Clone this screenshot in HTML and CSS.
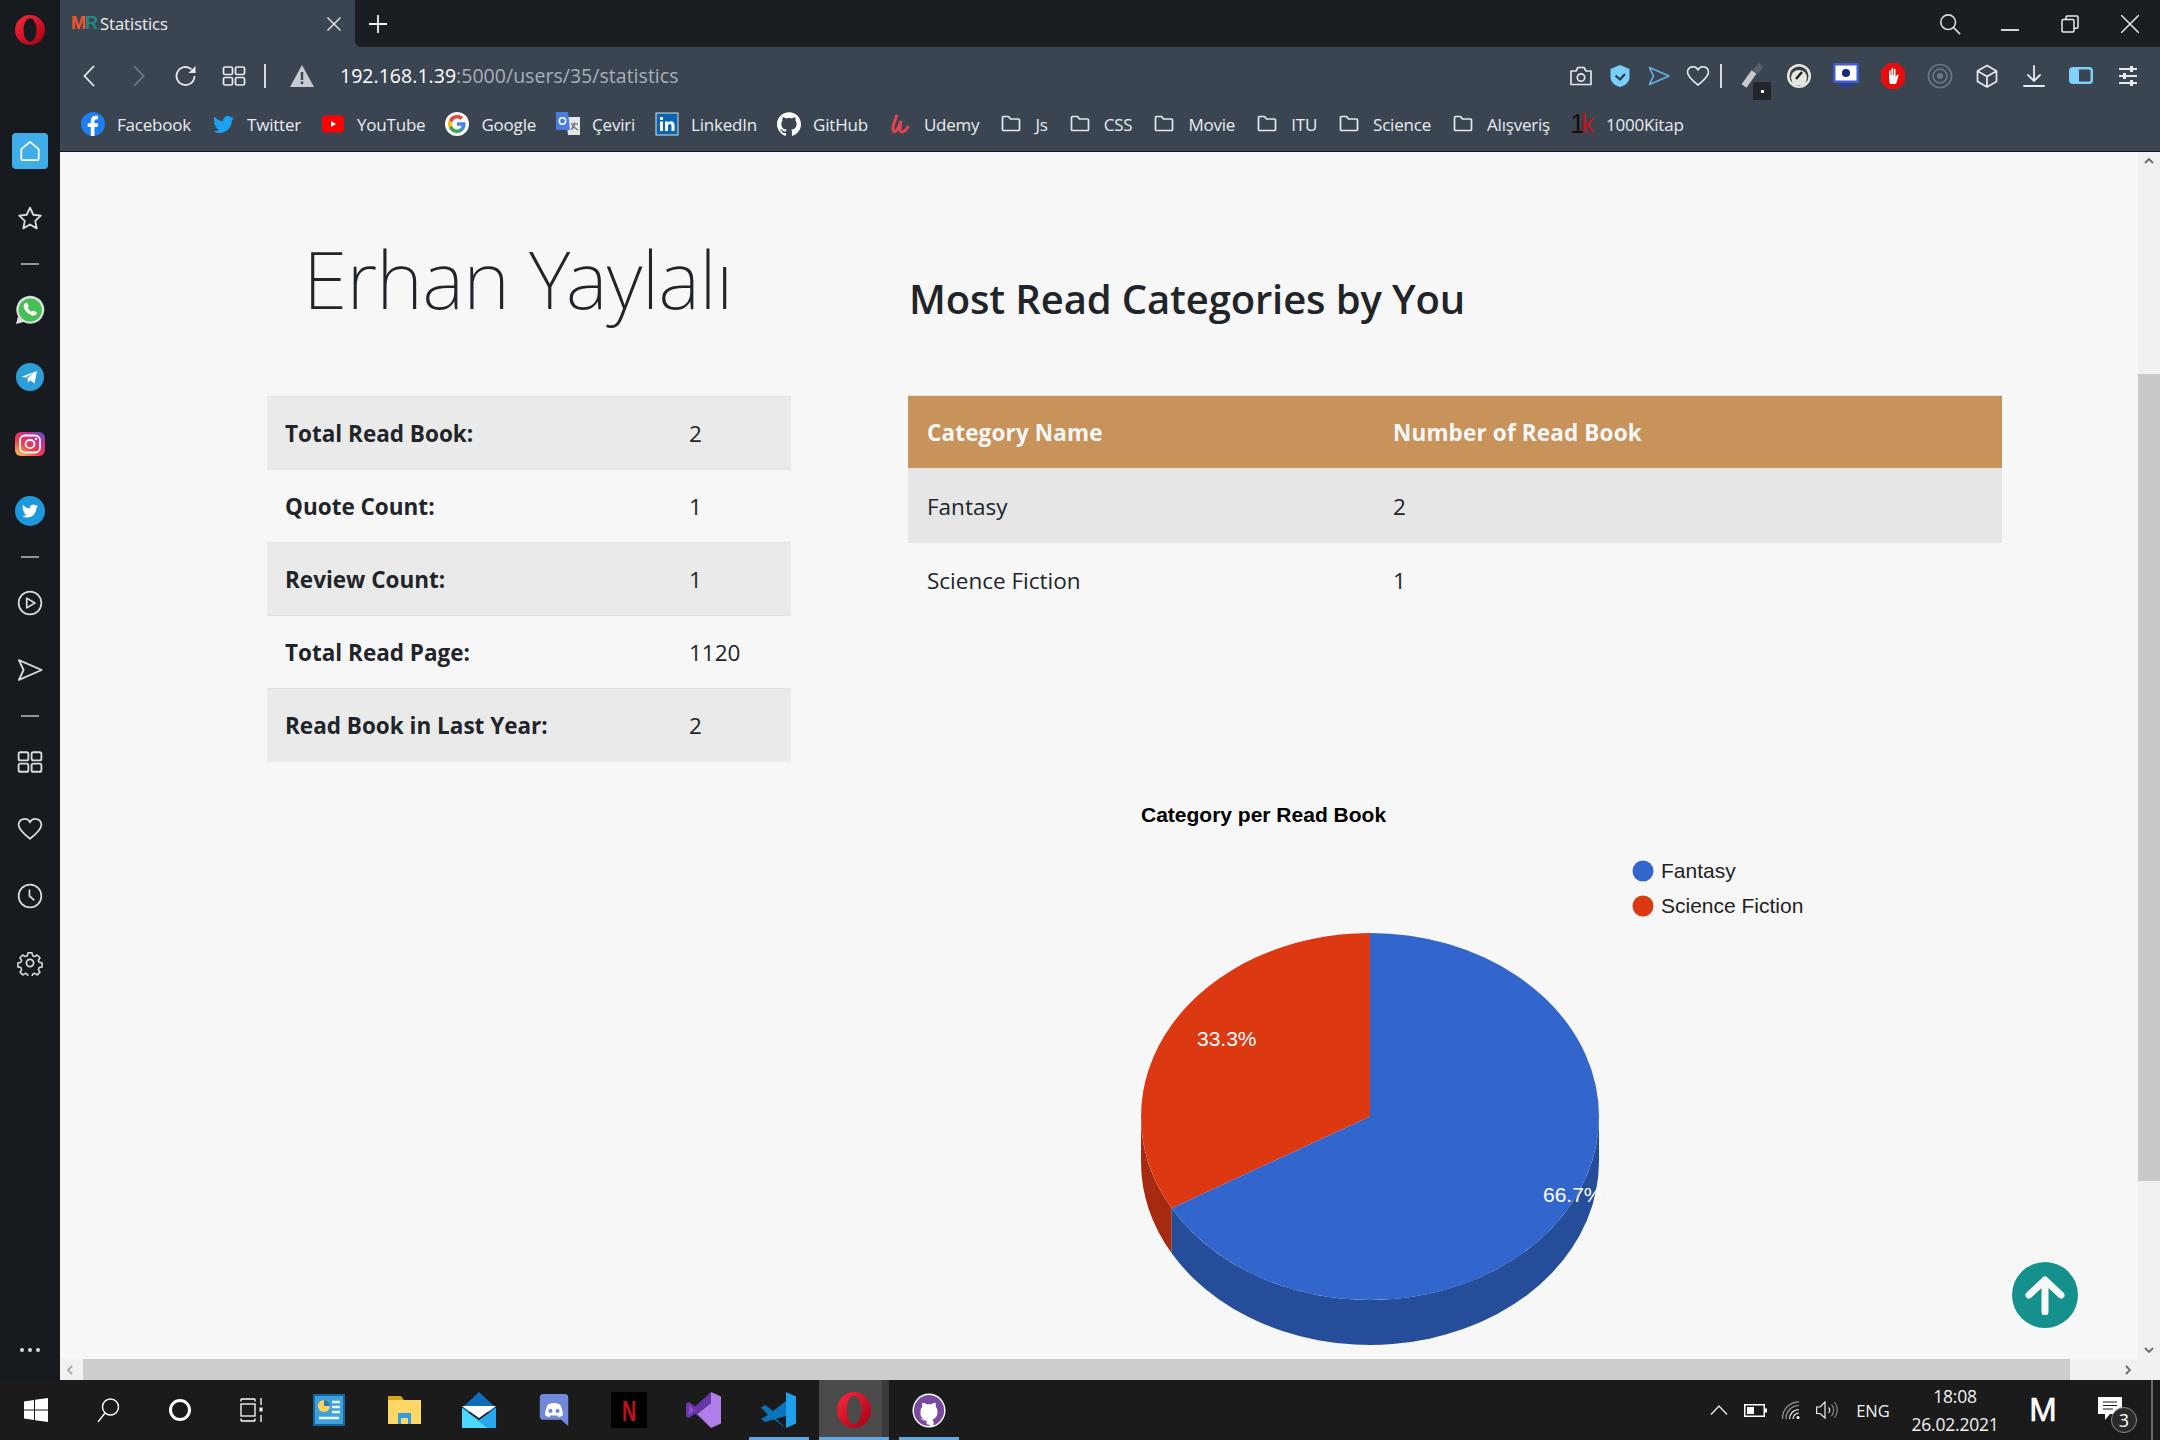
FILE: index.html
```html
<!DOCTYPE html>
<html lang="tr">
<head>
<meta charset="utf-8">
<title>Statistics</title>
<link rel="stylesheet" href="styles.css">
</head>
<body>
<svg class="defs" width="0" height="0" aria-hidden="true">
  <defs>
    <linearGradient id="opera" x1="0" y1="0" x2="0.9" y2="1"><stop offset="0" stop-color="#ff2a3c"/><stop offset="1" stop-color="#a50016"/></linearGradient>
    <linearGradient id="insta" x1="0.1" y1="1" x2="0.9" y2="0"><stop offset="0" stop-color="#fdc04f"/><stop offset="0.4" stop-color="#ee3a4a"/><stop offset="0.75" stop-color="#c42f93"/><stop offset="1" stop-color="#5f55c8"/></linearGradient>
    <symbol id="i-opera" viewBox="0 0 30 30" preserveAspectRatio="none"><path fill="url(#opera)" fill-rule="evenodd" d="M15 0a15 15 0 1 0 0 30a15 15 0 1 0 0-30ZM15 3.200a6.500 11.800 0 1 1 0 23.600a6.500 11.800 0 1 1 0-23.600Z"/></symbol>
    <symbol id="i-twitter" viewBox="0 0 24 24"><path d="M23.953 4.57a10 10 0 01-2.825.775 4.958 4.958 0 002.163-2.723c-.951.555-2.005.959-3.127 1.184a4.92 4.92 0 00-8.384 4.482C7.69 8.095 4.067 6.13 1.64 3.162a4.822 4.822 0 00-.666 2.475c0 1.71.87 3.213 2.188 4.096a4.904 4.904 0 01-2.228-.616v.06a4.923 4.923 0 003.946 4.827 4.996 4.996 0 01-2.212.085 4.936 4.936 0 004.604 3.417 9.867 9.867 0 01-6.102 2.105c-.39 0-.779-.023-1.17-.067a13.995 13.995 0 007.557 2.209c9.053 0 13.998-7.496 13.998-13.985 0-.21 0-.42-.015-.63A9.935 9.935 0 0024 4.59z"/></symbol>
    <symbol id="i-github" viewBox="0 0 24 24"><path d="M12 .297c-6.63 0-12 5.373-12 12 0 5.303 3.438 9.8 8.205 11.385.6.113.82-.258.82-.577 0-.285-.01-1.04-.015-2.04-3.338.724-4.042-1.61-4.042-1.61C4.422 18.07 3.633 17.7 3.633 17.7c-1.087-.744.084-.729.084-.729 1.205.084 1.838 1.236 1.838 1.236 1.07 1.835 2.809 1.305 3.495.998.108-.776.417-1.305.76-1.605-2.665-.3-5.466-1.332-5.466-5.93 0-1.31.465-2.38 1.235-3.22-.135-.303-.54-1.523.105-3.176 0 0 1.005-.322 3.3 1.23.96-.267 1.98-.399 3-.405 1.02.006 2.04.138 3 .405 2.28-1.552 3.285-1.23 3.285-1.23.645 1.653.24 2.873.12 3.176.765.84 1.23 1.91 1.23 3.22 0 4.61-2.805 5.625-5.475 5.92.42.36.81 1.096.81 2.22 0 1.606-.015 2.896-.015 3.286 0 .315.21.69.825.57C20.565 22.092 24 17.592 24 12.297c0-6.627-5.373-12-12-12"/></symbol>
    <symbol id="i-folder" viewBox="0 0 20 20"><path fill="none" stroke="currentColor" stroke-width="1.700" stroke-linejoin="round" d="M1.500 3.500a1 1 0 0 1 1-1h5l2 2.500h8a1 1 0 0 1 1 1v9.500a1 1 0 0 1-1 1h-15a1 1 0 0 1-1-1Z"/></symbol>
    <symbol id="i-send" viewBox="0 0 24 24"><path fill="none" stroke="currentColor" stroke-width="1.600" stroke-linejoin="round" d="M2.500 3.500 22 12 2.500 20.500 6.500 12Z"/></symbol>
    <symbol id="i-heart" viewBox="0 0 24 24"><path fill="none" stroke="currentColor" stroke-width="1.600" stroke-linejoin="round" d="M12 21C5 15.500 1.500 12 1.500 8A5.500 5.500 0 0 1 12 6a5.500 5.500 0 0 1 10.500 2c0 4-3.500 7.500-10.500 13Z"/></symbol>
    <symbol id="i-grid" viewBox="0 0 24 24"><g fill="none" stroke="currentColor" stroke-width="1.700"><rect x="1.500" y="3" width="9" height="7.500" rx="1.500"/><rect x="13.500" y="3" width="9" height="7.500" rx="1.500"/><rect x="1.500" y="13.500" width="9" height="7.500" rx="1.500"/><rect x="13.500" y="13.500" width="9" height="7.500" rx="1.500"/></g></symbol>
  </defs>
</svg>

<div class="screen">
  <aside class="sidebar">
    <div class="side-logo"><svg class="ic-opera-s"><use href="#i-opera" width="30" height="30"/></svg></div>
    <div class="side-slot">
      <span class="home-btn"><svg class="ic-22" viewBox="0 0 24 24"><path fill="none" stroke="#fff" stroke-width="1.900" stroke-linejoin="round" d="M12 2 2.500 10v10.500a1.500 1.500 0 0 0 1.500 1.500h16a1.500 1.500 0 0 0 1.500-1.500V10Z"/></svg></span>
    </div>
    <div class="side-slot"><svg class="ic-26" viewBox="0 0 24 24"><path fill="none" stroke="#d9dcdf" stroke-width="1.700" stroke-linejoin="round" d="M12 2.500l3 6.500 7 .8-5.200 4.800 1.400 7L12 18l-6.200 3.600 1.400-7L2 9.800l7-.8Z"/></svg></div>
    <div class="side-sep"></div>
    <div class="side-slot"><svg class="ic-30" viewBox="0 0 30 30"><path fill="#fff" d="M1 29l2-7.500A14 14 0 1 1 8.500 27Z" opacity=".85"/><circle cx="15.200" cy="15" r="11.600" fill="#45c055"/><path fill="#fff" d="M10.500 8c1-.6 1.600-.4 2 .5l1 2.300c.2.500 0 1-.8 1.900.9 1.800 2.300 3.100 4.200 4 .9-1 1.300-1.200 1.900-1l2.400 1.200c.7.400.8 1 .3 2-.8 1.600-2.700 2.100-4.800 1.300-4.500-1.700-7.200-4.700-8-8.200-.3-1.700.4-3.100 1.800-4Z"/></svg></div>
    <div class="side-slot"><svg class="ic-28" viewBox="0 0 28 28"><circle cx="14" cy="14" r="14" fill="#2c9fd8"/><path fill="#fff" d="M5.500 13.800 21 8l-2.500 12.500-4.300-3.200-2.200 2.200-.5-4.300 6.500-5.800-8 5Z"/></svg></div>
    <div class="side-slot"><svg class="ic-30" viewBox="0 0 30 30"><rect x="0" y="3" width="30" height="24" rx="6" fill="url(#insta)"/><rect x="5" y="6.500" width="20" height="17" rx="5" fill="none" stroke="#fff" stroke-width="1.800"/><ellipse cx="15" cy="15" rx="4.500" ry="4" fill="none" stroke="#fff" stroke-width="1.800"/><circle cx="21" cy="10" r="1.200" fill="#fff"/></svg></div>
    <div class="side-slot"><svg class="ic-30" viewBox="0 0 30 30"><circle cx="15" cy="15" r="15" fill="#1d98dc"/><use href="#i-twitter" x="7" y="7" width="16" height="16" fill="#fff"/></svg></div>
    <div class="side-sep"></div>
    <div class="side-slot"><svg class="ic-26" viewBox="0 0 24 24"><g fill="none" stroke="#d9dcdf" stroke-width="1.600" stroke-linejoin="round"><circle cx="12" cy="12" r="10.500"/><path d="M9 7.500 16.500 12 9 16.500Z"/></g></svg></div>
    <div class="side-slot side-send"><svg class="ic-28"><use href="#i-send"/></svg></div>
    <div class="side-sep"></div>
    <div class="side-slot side-plain"><svg class="ic-26"><use href="#i-grid"/></svg></div>
    <div class="side-slot side-plain"><svg class="ic-26"><use href="#i-heart"/></svg></div>
    <div class="side-slot"><svg class="ic-26" viewBox="0 0 24 24"><g fill="none" stroke="#d9dcdf" stroke-width="1.600"><circle cx="12" cy="12" r="10.500"/><path d="M11.500 6.500V12l4 3.500" stroke-linecap="round"/></g></svg></div>
    <div class="side-slot"><svg class="ic-26" viewBox="0 0 24 24"><g fill="none" stroke="#d9dcdf" stroke-width="1.600" stroke-linejoin="round"><circle cx="12" cy="12" r="3.300"/><path d="M10 1.500h4l.7 3 2 .9 2.700-1.600 2.800 2.800-1.600 2.700.8 2 3 .7v4l-3 .7-.8 2 1.600 2.700-2.800 2.800-2.700-1.600-2 .8-.7 3h-4l-.7-3-2-.8-2.700 1.600-2.800-2.800 1.600-2.700-.8-2-3-.7v-4l3-.7.800-2L1.700 6.600l2.800-2.800 2.700 1.600 2-.9Z" transform="translate(1.200 1.200) scale(.9)"/></g></svg></div>
    <div class="side-dots"><i></i><i></i><i></i></div>
  </aside>

  <div class="browser">
    <div class="tabstrip">
      <div class="tab">
        <span class="favicon"><b class="fav-m">M</b><b class="fav-r">R</b></span>
        <span class="tab-title">Statistics</span>
        <svg class="tab-close" viewBox="0 0 16 16"><path stroke="#e8eaed" stroke-width="1.400" d="M1.500 1.500l13 13M14.500 1.500l-13 13"/></svg>
      </div>
      <div class="strip-fill">
        <svg class="tab-plus" viewBox="0 0 18 18"><path stroke="#f2f3f4" stroke-width="1.800" d="M9 0v18M0 9h18"/></svg>
        <div class="win-controls">
          <span class="win-btn win-search"><svg class="ic-22" viewBox="0 0 24 24"><g fill="none" stroke="#d8dadd" stroke-width="1.800"><circle cx="10" cy="10" r="8"/><path d="M16 16l7 7"/></g></svg></span>
          <span class="win-btn"><svg class="ic-18" viewBox="0 0 18 18"><path stroke="#e8eaed" stroke-width="1.800" d="M0 15h18"/></svg></span>
          <span class="win-btn"><svg class="ic-18" viewBox="0 0 18 18"><g fill="none" stroke="#e8eaed" stroke-width="1.500"><rect x="1" y="4.500" width="12" height="12.500" rx="1.200"/><path d="M5 4.500V2.200A1.200 1.200 0 0 1 6.200 1H16a1 1 0 0 1 1 1v10a1.200 1.200 0 0 1-1.200 1.200H13"/></g></svg></span>
          <span class="win-btn"><svg class="ic-18" viewBox="0 0 18 18"><path stroke="#e8eaed" stroke-width="1.500" d="M0 0l18 18M18 0 0 18"/></svg></span>
        </div>
      </div>
    </div>

    <div class="addressbar">
      <span class="nav-btn"><svg class="ic-24" viewBox="0 0 24 24"><path fill="none" stroke="#e8eaed" stroke-width="1.800" d="M16 2 6.500 12 16 22"/></svg></span>
      <span class="nav-btn"><svg class="ic-24" viewBox="0 0 24 24"><path fill="none" stroke="#6f7884" stroke-width="1.800" d="M8 2l9.500 10L8 22"/></svg></span>
      <span class="nav-btn"><svg class="ic-24" viewBox="0 0 24 24"><path fill="none" stroke="#e8eaed" stroke-width="1.800" d="M20.500 12a9 9 0 1 1-3-6.700"/><path fill="#e8eaed" d="M21.500 2v7h-7Z"/></svg></span>
      <span class="nav-btn nav-light"><svg class="ic-24"><use href="#i-grid"/></svg></span>
      <span class="bar-sep"></span>
      <svg class="warn-icon" viewBox="0 0 24 22"><path fill="#c8ccd1" d="M12 0 24 22H0Z"/><path fill="#3b4552" d="M10.800 7h2.400v8h-2.400zM10.800 16.500h2.400v2.500h-2.400z"/></svg>
      <span class="url"><span class="url-host">192.168.1.39</span>:5000/users/35/statistics</span>
      <div class="ext-group ext-a">
        <span class="ext-a-slot"><svg class="ic-24" viewBox="0 0 24 24"><g fill="none" stroke="#e3e5e8" stroke-width="1.700" stroke-linejoin="round"><path d="M2 7h5l2-3.500h6L17 7h5v13.500H2Z"/><circle cx="12" cy="13.500" r="3.700"/></g></svg></span>
        <span class="ext-a-slot"><svg class="ic-24" viewBox="0 0 24 24"><path fill="#79d0fb" d="M12 1 21.500 5v8c0 5-4 8.500-9.500 10C6.500 21.500 2.500 18 2.500 13V5Z"/><path fill="none" stroke="#2f3a46" stroke-width="2.200" d="M7.500 11.500l4.500 4 5-5.500"/></svg></span>
        <span class="ext-a-slot ext-blue"><svg class="ic-24"><use href="#i-send"/></svg></span>
        <span class="ext-a-slot ext-light"><svg class="ic-24"><use href="#i-heart"/></svg></span>
      </div>
      <span class="bar-sep bar-sep-b"></span>
      <div class="ext-group ext-b">
        <span class="ext-b-slot ext-drop">
          <svg class="ic-26" viewBox="0 0 26 26"><path stroke="#c9c9c9" stroke-width="6" d="M4 23 14 9"/><path stroke="#5b5f66" stroke-width="6" d="M15 9l6-7"/></svg>
          <span class="ext-badge"><i></i></span>
        </span>
        <span class="ext-b-slot"><svg class="ic-26" viewBox="0 0 26 26"><circle cx="13" cy="13" r="12" fill="#e7e7e2"/><circle cx="13" cy="13" r="9.500" fill="#3a3f45"/><path fill="#e7e7e2" d="M5 15a8 8 0 0 1 16 0l-2 7H7Z"/><path stroke="#222" stroke-width="2.400" d="M10 16l6-7"/></svg></span>
        <span class="ext-b-slot"><svg class="ic-26" viewBox="0 0 26 26"><path fill="#2a3d9d" d="M6 19h14l-2 5H8Z"/><rect x="0" y="0" width="26" height="20" rx="1.500" fill="#3f5dd0"/><rect x="2.500" y="2.500" width="21" height="15" fill="#fff"/><circle cx="13" cy="10" r="4" fill="#182a80"/></svg></span>
        <span class="ext-b-slot"><svg class="ic-26" viewBox="0 0 26 26"><path fill="#e60c0c" d="M8 0h10l7 7v12l-7 7H8l-7-7V7Z"/><path fill="#fff" d="M9 8c0-1 1.700-1 1.700 0v4h.7V5.500c0-1 1.700-1 1.700 0V12h.7V6.500c0-1 1.700-1 1.700 0V14l1.500-2c.8-1 2-.3 1.500.8L16 21H10c-1-3-1-6-1-13Z"/></svg></span>
        <span class="ext-b-slot"><svg class="ic-26" viewBox="0 0 26 26"><g fill="none" stroke="#6e7780" stroke-width="1.700"><circle cx="13" cy="13" r="11.500"/><circle cx="13" cy="13" r="7"/></g><circle cx="13" cy="13" r="3" fill="#6e7780"/></svg></span>
        <span class="ext-b-slot"><svg class="ic-24" viewBox="0 0 24 24"><path fill="none" stroke="#e8eaed" stroke-width="1.700" stroke-linejoin="round" d="M12 1.500 21.500 7v10.500L12 23l-9.500-5.500V7ZM2.500 7 12 12.500 21.500 7M12 12.500V23"/></svg></span>
        <span class="ext-b-slot"><svg class="ic-24" viewBox="0 0 24 24"><path fill="none" stroke="#e8eaed" stroke-width="1.800" stroke-linecap="round" d="M12 2v14M6 11l6 6 6-6M2 22h20"/></svg></span>
        <span class="ext-b-slot"><svg class="ic-26" viewBox="0 0 26 26"><rect x="1" y="4" width="24" height="17" rx="4" fill="#7fd0fb"/><path fill="#3b4552" d="M11 6.500h10a1.500 1.500 0 0 1 1.500 1.500v9a1.500 1.500 0 0 1-1.500 1.500H11Z"/></svg></span>
        <span class="ext-b-slot"><svg class="ic-24" viewBox="0 0 24 24"><path fill="none" stroke="#e8eaed" stroke-width="1.800" d="M3 5h18M3 12h18M3 19h18"/><path fill="none" stroke="#e8eaed" stroke-width="3" d="M15.500 2v6M8.500 9v6M15.500 16v6"/></svg></span>
      </div>
    </div>

    <nav class="bookmarks">
      <a class="bm"><svg class="ic-24" viewBox="0 0 24 24"><circle cx="12" cy="12" r="12" fill="#1f7ff0"/><path fill="#fff" d="M13.500 24v-9h3l.6-3.700h-3.600V9.200c0-1 .5-1.900 2-1.900H17V4c-.6-.1-1.500-.2-2.500-.2-2.800 0-4.700 1.700-4.700 4.800v2.700H6.700V15h3.100v9Z"/></svg>Facebook</a>
      <a class="bm"><svg class="ic-21 ic-tw"><use href="#i-twitter"/></svg>Twitter</a>
      <a class="bm"><svg class="ic-24" viewBox="0 0 24 24"><rect x="1" y="3.500" width="22" height="17" rx="4" fill="#f00"/><path fill="#fff" d="M10 9l5 3-5 3Z"/></svg>YouTube</a>
      <a class="bm"><svg class="ic-24" viewBox="0 0 24 24"><circle cx="12" cy="12" r="12" fill="#fff"/><path fill="#4285f4" d="M20.500 12.200c0-.7-.1-1.300-.2-1.900H12v3.500h4.800a4.200 4.200 0 0 1-1.800 2.700v2.300h2.900c1.700-1.600 2.600-3.900 2.600-6.600Z"/><path fill="#34a853" d="M12 21c2.400 0 4.400-.8 5.900-2.200L15 16.500c-.8.500-1.800.9-3 .9-2.300 0-4.300-1.600-5-3.700H4v2.400A9 9 0 0 0 12 21Z"/><path fill="#fbbc05" d="M7 13.700a5.400 5.400 0 0 1 0-3.400V7.900H4a9 9 0 0 0 0 8.200Z"/><path fill="#ea4335" d="M12 6.600c1.300 0 2.500.5 3.400 1.300l2.600-2.600A9 9 0 0 0 4 7.900l3 2.400c.7-2.100 2.700-3.700 5-3.700Z"/></svg>Google</a>
      <a class="bm"><svg class="ic-24" viewBox="0 0 24 24"><path fill="#e4e6e8" d="M10 5h14v18H12Z"/><path fill="#4a7de0" d="M0 0h12l2 18H0Z"/><circle cx="6.500" cy="9" r="3.200" fill="none" stroke="#fff" stroke-width="1.500"/><path stroke="#7b8088" stroke-width="1.400" d="M15 12h7M18.500 10.500c0 3-1.500 6-3.500 7M16.500 13c1 2 3 4 5.500 5"/></svg>Çeviri</a>
      <a class="bm"><svg class="ic-24" viewBox="0 0 24 24"><rect x="1" y="1" width="22" height="22" fill="#0a66b0" stroke="#d5dbe0" stroke-width="1"/><path fill="#fff" d="M5 9.500h3V19H5zM5 5h3v3H5zM10 9.500h2.900v1.300c.6-1 1.700-1.600 3-1.600 2.500 0 3.600 1.500 3.600 4.200V19h-3v-5c0-1.400-.5-2.100-1.600-2.100-1.200 0-1.900.8-1.900 2.200V19h-3Z"/></svg>LinkedIn</a>
      <a class="bm"><svg class="ic-24 ic-white"><use href="#i-github"/></svg>GitHub</a>
      <a class="bm"><svg class="ic-24" viewBox="0 0 24 24"><path fill="none" stroke="#e4434f" stroke-width="3" stroke-linecap="round" d="M8.500 4C7.500 9 4 13 5 18c1 4 5 1 8-9-1 5-2 9 0 10.500 2 1.500 5-1.500 7-4.500"/></svg>Udemy</a>
      <a class="bm"><svg class="ic-20 ic-fold"><use href="#i-folder"/></svg>Js</a>
      <a class="bm"><svg class="ic-20 ic-fold"><use href="#i-folder"/></svg>CSS</a>
      <a class="bm"><svg class="ic-20 ic-fold"><use href="#i-folder"/></svg>Movie</a>
      <a class="bm"><svg class="ic-20 ic-fold"><use href="#i-folder"/></svg>ITU</a>
      <a class="bm"><svg class="ic-20 ic-fold"><use href="#i-folder"/></svg>Science</a>
      <a class="bm"><svg class="ic-20 ic-fold"><use href="#i-folder"/></svg>Alışveriş</a>
      <a class="bm"><span class="onek"><span class="onek-1">1</span><span class="onek-k">k</span></span>1000Kitap</a>
    </nav>

    <div class="viewport">
      <main class="page">
        <section class="col-left">
          <h1 class="user-name">Erhan Yaylalı</h1>
          <table class="stats">
            <tbody>
              <tr><th>Total Read Book:</th><td>2</td></tr>
              <tr><th>Quote Count:</th><td>1</td></tr>
              <tr><th>Review Count:</th><td>1</td></tr>
              <tr><th>Total Read Page:</th><td>1120</td></tr>
              <tr><th>Read Book in Last Year:</th><td>2</td></tr>
            </tbody>
          </table>
        </section>
        <section class="col-right">
          <h2 class="section-title">Most Read Categories by You</h2>
          <table class="cats">
            <thead><tr><th>Category Name</th><th>Number of Read Book</th></tr></thead>
            <tbody>
              <tr><td>Fantasy</td><td>2</td></tr>
              <tr><td>Science Fiction</td><td>1</td></tr>
            </tbody>
          </table>
          <svg class="chart" viewBox="908 780 1094 579">
            <defs><clipPath id="pie-clip"><rect x="1100" y="900" width="501" height="459"/></clipPath></defs>
            <text class="chart-title" x="1141" y="821">Category per Read Book</text>
            <circle cx="1643" cy="870" r="10.500" fill="#3366cc"/>
            <text class="chart-legend" x="1661" y="877">Fantasy</text>
            <circle cx="1643" cy="905" r="10.500" fill="#dc3912"/>
            <text class="chart-legend" x="1661" y="912">Science Fiction</text>
            <path fill="#a52a0f" d="M1141 1115.500A229 183.500 0 0 0 1171.700 1207.250V1252.250A229 183.500 0 0 1 1141 1160.500Z"/>
            <path fill="#264d99" d="M1599 1115.500A229 183.500 0 0 1 1171.700 1207.250V1252.250A229 183.500 0 0 0 1599 1160.500Z"/>
            <path fill="#dc3912" d="M1370 1115.500 1171.700 1207.250A229 183.500 0 0 1 1370 932Z"/>
            <path fill="#3366cc" d="M1370 1115.500V932A229 183.500 0 1 1 1171.700 1207.250Z"/>
            <text class="chart-label" x="1197" y="1045">33.3%</text>
            <g clip-path="url(#pie-clip)"><text class="chart-label" x="1543" y="1201">66.7%</text></g>
          </svg>
        </section>
        <a class="to-top"><svg class="ic-40" viewBox="0 0 40 40"><path fill="none" stroke="#f7f7f7" stroke-width="7" stroke-linecap="round" stroke-linejoin="round" d="M20 37V5M4 20 20 5l16 15"/></svg></a>
      </main>
      <div class="vscroll">
        <svg class="sb-arrow" viewBox="0 0 10 6"><path fill="none" stroke="#6b6b6b" stroke-width="1.800" d="M1 5l4-4 4 4"/></svg>
        <div class="vtrack"><div class="vthumb"></div></div>
        <svg class="sb-arrow" viewBox="0 0 10 6"><path fill="none" stroke="#6b6b6b" stroke-width="1.800" d="M1 1l4 4 4-4"/></svg>
      </div>
      <div class="hscroll">
        <svg class="sb-arrow-h" viewBox="0 0 6 10"><path fill="none" stroke="#a8a8a8" stroke-width="1.800" d="M5 1 1 5l4 4"/></svg>
        <div class="hthumb"></div>
        <svg class="sb-arrow-h" viewBox="0 0 6 10"><path fill="none" stroke="#6b6b6b" stroke-width="1.800" d="M1 1l4 4-4 4"/></svg>
      </div>
      <div class="corner"></div>
    </div>
  </div>

  <footer class="taskbar">
    <span class="tb-sys"><svg class="ic-24" viewBox="0 0 24 24"><path fill="#fff" d="M0 3.500 10 2v9.500H0ZM11 1.800 24 0v11.500H11ZM0 12.500h10V22L0 20.500ZM11 12.500h13V24l-13-1.800Z"/></svg></span>
    <span class="tb-sys"><svg class="ic-24" viewBox="0 0 24 24"><g fill="none" stroke="#fff" stroke-width="1.400"><circle cx="14.500" cy="9" r="8"/><path d="M9 15 2 24"/></g></svg></span>
    <span class="tb-sys"><svg class="ic-24" viewBox="0 0 24 24"><circle cx="12" cy="12" r="9.500" fill="none" stroke="#fff" stroke-width="3"/></svg></span>
    <span class="tb-sys tb-view"><svg class="ic-24" viewBox="0 0 24 24"><g fill="none" stroke="#fff" stroke-width="1.300"><path d="M1 1h14M1 23h14M1 3.500V1M15 3.500V1M1 23v-2.500M15 23v-2.500"/><rect x="1" y="6" width="14" height="12"/><path d="M21 0v7M21 17v7"/></g><rect x="19.500" y="9.500" width="3" height="4" fill="#fff"/></svg></span>
    <div class="tb-apps">
      <span class="tb-app"><svg class="ic-32" viewBox="0 0 32 32"><rect x="1" y="1" width="30" height="30" fill="#3fa0dc" stroke="#15689f" stroke-width="2"/><circle cx="11" cy="12" r="6" fill="#ffd25a"/><path fill="#2878b5" d="M11 12V6a6 6 0 0 1 6 6Z"/><path stroke="#e9f5ff" stroke-width="2.500" d="M19 8h8M19 13h8M19 18h8M6 24h20"/></svg></span>
      <span class="tb-app"><svg class="tb-explorer" viewBox="0 0 33 28"><path fill="#d9a21d" d="M0 0h13l3 4H0Z"/><path fill="#ffd766" d="M0 4h33v24H0Z"/><path fill="#2d9fe0" d="M10 17h13v11h-3v-6h-7v6h-3Z"/></svg></span>
      <span class="tb-app"><svg class="ic-36" viewBox="0 0 36 36"><path fill="#0f6cbd" d="M18 0 35 16v4H1v-4Z"/><path fill="#fff" d="M1 14h34L18 26Z"/><path fill="#28a8ea" d="M1 16 18 28l17-12v20H1Z"/><path fill="#50d9ff" d="M1 16 26 36H1Z"/></svg></span>
      <span class="tb-app"><svg class="tb-discord" viewBox="0 0 36 36"><path fill="#7289da" d="M6 0h24a4 4 0 0 1 4 4v32l-8-7H6a4 4 0 0 1-4-4V4a4 4 0 0 1 4-4Z"/><path fill="#fff" d="M11 12c4-2.500 10-2.500 14 0 2 4 3 8 3 12-2 1.500-4 2-5 2l-1.500-2.200c-2 .7-5 .7-7 0L13 26c-1 0-3-.5-5-2 0-4 1-8 3-12Z"/><circle cx="14" cy="19" r="2.300" fill="#7289da"/><circle cx="22" cy="19" r="2.300" fill="#7289da"/></svg></span>
      <span class="tb-app"><svg class="ic-36" viewBox="0 0 36 36"><rect width="36" height="36" fill="#000"/><text class="nf-n" transform="translate(18 29) scale(.65 1)" text-anchor="middle">N</text></svg></span>
      <span class="tb-app"><svg class="ic-36" viewBox="0 0 36 36"><path fill="#b17ee8" d="M25 0 35 4.500v27L25 36l-14-14 14-11Z"/><path fill="#6936aa" d="M25 0v11L11 22l14 14L9 21.500 3 26 0 24.500v-13L3 10l6 4.500Z"/><path fill="#8c52d0" d="M3 13v10l5-5Z"/></svg></span>
      <span class="tb-app tb-on"><svg class="ic-36" viewBox="0 0 36 36"><path fill="#1ea0ec" d="M25 0 35 4.500v27L25 36Z"/><path fill="#0a78c4" d="M25 0v9L12 19 4 13 0 15.500 8 24l17 12L9 21.500 0 27l4 3L25 24Z" opacity=".95"/></svg></span>
      <span class="tb-app tb-on tb-current"><svg class="ic-opera-t"><use href="#i-opera" width="34" height="36"/></svg><span class="tb-edge"></span></span>
      <span class="tb-app tb-on"><svg class="tb-ghd" viewBox="0 0 36 36"><ellipse cx="18" cy="18" rx="17.500" ry="18" fill="#ffffff"/><ellipse cx="18" cy="18" rx="16" ry="16.500" fill="#7a4a9e"/><path fill="#fff" d="M18 36c-3 0-3-1-3-3v-2c-4 .5-6-1-7-3 2 1 3 2 5 2-4-2-6-5-5-10 0-2 .5-4 2-5-.5-2-.2-4 .5-5 2 0 3.500 1 5 2 2-.4 3.800-.4 5 0 1.500-1 3-2 5-2 .7 1 1 3 .5 5 1.500 1 2 3 2 5 .5 5-2 8.500-6 10 1 1 1.500 2 1.500 4v2c0 1.500 0 2-3 2Z" transform="translate(2 1) scale(.89)"/></svg></span>
    </div>
    <div class="tray">
      <span class="tray-i"><svg class="tray-caret" viewBox="0 0 18 10"><path fill="none" stroke="#e6e6e6" stroke-width="1.400" d="M1 9.500 9 1l8 8.500"/></svg></span>
      <span class="tray-i"><svg class="tray-batt" viewBox="0 0 23 13"><rect x=".75" y=".75" width="19.500" height="11.500" fill="none" stroke="#fff" stroke-width="1.500"/><rect x="3" y="3" width="7" height="7" fill="#fff"/><rect x="21" y="4.500" width="2" height="4" fill="#fff"/></svg></span>
      <span class="tray-i"><svg class="ic-18" viewBox="0 0 18 18"><g fill="none" stroke="#9a9a9a" stroke-width="1.200"><path d="M.5 18A16.500 16.500 0 0 1 17 .8"/><path d="M4 18A13 13 0 0 1 17 4.500"/></g><g fill="none" stroke="#e6e6e6" stroke-width="1.200"><path d="M7.500 18A9.500 9.500 0 0 1 17 8.500"/><path d="M11 18a6 6 0 0 1 6-6"/></g><circle cx="16" cy="16.500" r="1.500" fill="#fff"/></svg></span>
      <span class="tray-i"><svg class="tray-vol" viewBox="0 0 23 18"><path fill="none" stroke="#f0f0f0" stroke-width="1.200" d="M.6 6h3.500L9 1v16L4 12.500H.6Z"/><path fill="none" stroke="#e0e0e0" stroke-width="1.200" d="M12.500 6.500a4 4 0 0 1 0 5.500"/><path fill="none" stroke="#888" stroke-width="1.200" d="M15.500 3.500a9 9 0 0 1 0 11.500M18.500 1a13 13 0 0 1 0 16"/></svg></span>
      <span class="tray-lang">ENG</span>
      <span class="tray-clock"><span>18:08</span><span>26.02.2021</span></span>
      <span class="tray-m"><span>M</span></span>
      <span class="tray-notif">
        <svg class="notif-icon" viewBox="0 0 24 24"><path fill="#fff" d="M0 0h24v17H12l-5 6v-6H0Z"/><path stroke="#1b1b1b" stroke-width="1.200" d="M5 5h14M5 8.500h14M5 12h10"/></svg>
        <span class="notif-badge">3</span>
      </span>
      <span class="tray-edge"></span>
    </div>
  </footer>
</div>
</body>
</html>
```
FILE: styles.css
```css
* { box-sizing: border-box; }
html, body { margin: 0; padding: 0; width: 2160px; height: 1440px; overflow: hidden; }
body { font-family: "Open Sans", "Noto Sans", sans-serif; color: #212529; background: #171b20; }
svg { display: block; flex: none; }
.defs { position: absolute; }

.screen { width: 2160px; height: 1440px; display: grid; grid-template-columns: 60px 2100px; grid-template-rows: 1380px 60px; overflow: hidden; }

.ic-18 { width: 18px; height: 18px; }
.ic-20 { width: 20px; height: 20px; }
.ic-21 { width: 21px; height: 21px; margin: 0 1.500px; }
.ic-22 { width: 22px; height: 22px; }
.ic-24 { width: 24px; height: 24px; }
.ic-26 { width: 26px; height: 26px; }
.ic-28 { width: 28px; height: 28px; }
.ic-30 { width: 30px; height: 30px; }
.ic-32 { width: 32px; height: 32px; }
.ic-36 { width: 36px; height: 36px; }
.ic-40 { width: 40px; height: 40px; }

/* sidebar */
.sidebar { background: #171b20; display: flex; flex-direction: column; align-items: stretch; color: #d9dcdf; }
.side-logo { height: 117px; padding-top: 15px; display: flex; justify-content: center; }
.ic-opera-s { width: 30px; height: 30px; }
.side-slot { height: 67px; display: flex; align-items: center; justify-content: center; }
.side-sep { height: 25px; display: flex; align-items: center; justify-content: center; }
.side-sep::before { content: ""; width: 18px; height: 2px; background: #8d969e; }
.home-btn { width: 36px; height: 36px; border-radius: 4px; background: #3eade8; display: flex; align-items: center; justify-content: center; }
.side-dots { margin-top: auto; height: 60px; display: flex; justify-content: center; gap: 4px; padding-top: 28px; }
.side-dots i { width: 4px; height: 4px; border-radius: 50%; background: #d9dcdf; }

/* tabstrip */
.browser { display: flex; flex-direction: column; min-width: 0; }
.tabstrip { height: 47px; display: flex; background: #3b4552; }
.tab { width: 295px; display: flex; align-items: center; padding-left: 11px; color: #f1f2f3; border-top-left-radius: 6px; }
.favicon { font-family: "Liberation Sans", sans-serif; font-size: 18px; letter-spacing: -1px; width: 29px; }
.fav-m { color: #f1592a; }
.fav-r { color: #1f8a80; }
.tab-title { font-size: 16.500px; flex: 1; }
.tab-close { width: 16px; height: 16px; margin-right: 13px; }
.strip-fill { flex: 1; background: #1a1d22; border-bottom-left-radius: 6px; display: flex; align-items: center; }
.tab-plus { width: 18px; height: 18px; margin-left: 14px; }
.win-controls { margin-left: auto; display: flex; align-items: center; padding-right: 0; }
.win-btn { width: 60px; height: 47px; display: flex; align-items: center; justify-content: center; }

/* address bar */
.addressbar { height: 58px; background: #3b4552; display: flex; align-items: center; padding-left: 6px; }
.nav-btn { width: 48px; display: flex; justify-content: center; }
.nav-light { color: #e8eaed; }
.bar-sep { width: 2px; height: 24px; background: #d8dadd; margin-left: 6px; }
.warn-icon { width: 24px; height: 22px; margin-left: 24px; }
.url { margin-left: 26px; margin-bottom: 2px; font-size: 19.500px; letter-spacing: .03px; color: #a9b0b9; }
.url-host { color: #fff; }
.ext-group { display: flex; }
.ext-a { margin-left: auto; }
.ext-a-slot { width: 39px; display: flex; justify-content: center; }
.ext-blue { color: #64b5e6; }
.ext-light { color: #e6e8ea; }
.bar-sep-b { margin-left: 3px; margin-right: 7px; }
.ext-b { padding-right: 9px; }
.ext-b-slot { width: 46.875px; height: 40px; display: flex; align-items: center; justify-content: center; position: relative; }
.ext-badge { position: absolute; left: 24px; top: 26px; width: 18px; height: 18px; background: #22262b; display: flex; align-items: center; justify-content: center; }
.ext-badge i { width: 3px; height: 3px; background: #fff; }

/* bookmarks */
.bookmarks { height: 47px; background: #3b4552; border-bottom: 1px solid #15181c; padding: 0 0 8px 21px; display: flex; align-items: center; gap: 20px; font-size: 17px; letter-spacing: -.21px; color: #e9ecef; }
.bm { display: flex; align-items: center; gap: 12px; white-space: nowrap; }
.ic-tw { fill: #1da1f2; }
.ic-white { fill: #fff; }
.ic-fold { color: #e6e8ea; margin: 0 2px; }
.onek { width: 24px; font-family: "Liberation Sans", sans-serif; font-size: 27px; letter-spacing: -4px; display: flex; }
.onek-1 { color: #111; }
.onek-k { color: #c1121c; }

/* viewport */
.viewport { flex: 1; min-height: 0; display: grid; grid-template-columns: 2078px 22px; grid-template-rows: 1207px 21px; background: #f7f7f7; }
.page { position: relative; overflow: hidden; display: flex; padding-left: 207px; gap: 117px; }
.col-left { width: 524px; }
.col-right { width: 1094px; }
.user-name { margin: 0; height: 244px; padding: 70px 0 0 36px; font-family: "Noto Sans", "Open Sans", sans-serif; font-size: 80px; line-height: 1.4; font-weight: 200; white-space: nowrap; letter-spacing: -.7px; }
.stats { border-collapse: collapse; width: 524px; font-size: 22.500px; }
.stats tr { height: 73px; border-top: 1px solid #dee2e6; }
.stats tr:nth-child(odd) { background: #eaeaea; }
.stats th { width: 404px; padding: 1px 0 0 18px; text-align: left; font-weight: 700; }
.stats td { padding: 1px 0 0 18px; font-weight: 400; }
.section-title { margin: 0; height: 243px; padding: 117px 0 0 1px; font-size: 40px; line-height: 60px; font-weight: 600; letter-spacing: -.13px; white-space: nowrap; }
.cats { border-collapse: collapse; width: 1094px; font-size: 22.500px; }
.cats th { height: 72px; background: #c8935a; color: #f7f7f7; text-align: left; padding: 2px 0 0 19px; font-weight: 700; letter-spacing: .15px; border-top: 1px solid #dee2e6; }
.cats th:first-child, .cats td:first-child { width: 466px; }
.cats td { padding: 2px 0 0 19px; height: 73px; }
.cats tbody tr:nth-child(odd) td { background: #e6e6e6; height: 75px; }
.chart { display: block; width: 1094px; height: 579px; margin-top: 165px; }
.chart-title { font-family: "Liberation Sans", sans-serif; font-weight: 700; font-size: 21px; fill: #000; }
.chart-legend { font-family: "Liberation Sans", sans-serif; font-size: 21px; fill: #222; }
.chart-label { font-family: "Liberation Sans", sans-serif; font-size: 21px; fill: #fff; }
.nf-n { font-family: "Liberation Sans", sans-serif; font-weight: 700; font-size: 30px; fill: #c1121c; }
.to-top { position: absolute; left: 1952px; top: 1110px; width: 66px; height: 66px; border-radius: 50%; background: #15908c; display: flex; align-items: center; justify-content: center; }

/* scrollbars */
.vscroll { background: #f1f1f1; display: flex; flex-direction: column; align-items: center; justify-content: space-between; padding: 6px 0; }
.sb-arrow { width: 10px; height: 6px; }
.vtrack { flex: 1; width: 100%; position: relative; }
.vthumb { position: absolute; left: 0; right: 0; top: 210px; height: 807px; background: #c9c9c9; }
.hscroll { background: #f1f1f1; display: flex; align-items: center; }
.sb-arrow-h { width: 6px; height: 10px; margin: 0 7px 0 7px; }
.hthumb { width: 1987px; height: 21px; margin-left: 3px; margin-right: auto; background: #cdcdcd; }
.corner { background: #f1f1f1; }

/* taskbar */
.taskbar { grid-column: 1 / 3; background: #1b1b1b; display: flex; align-items: center; color: #f2f2f2; }
.tb-sys { width: 72px; display: flex; justify-content: center; }
.tb-view { margin-right: 6px; }
.tb-apps { display: flex; gap: 5px; height: 60px; }
.tb-app { width: 70px; height: 60px; display: flex; align-items: center; justify-content: center; position: relative; }
.tb-on::after { content: ""; position: absolute; left: 5px; right: 5px; bottom: 0; height: 3px; background: #64a7df; }
.tb-current { background: #4a4a4a; }
.tb-current::after { left: 0; right: 0; }
.tb-edge { position: absolute; right: 0; top: 0; width: 7px; height: 100%; background: #3a3a3a; }
.ic-opera-t { width: 34px; height: 36px; }
.tb-explorer { width: 33px; height: 28px; }
.tb-discord { width: 32px; height: 32px; }
.tb-ghd { width: 34px; height: 35px; }
.tray { margin-left: auto; display: flex; align-items: center; height: 60px; }
.tray-i { width: 36px; display: flex; justify-content: center; }
.tray-caret { width: 18px; height: 10px; }
.tray-batt { width: 23px; height: 13px; }
.tray-vol { width: 23px; height: 18px; }
.tray-lang { width: 56px; text-align: center; font-size: 16.500px; }
.tray-clock { width: 108px; display: flex; flex-direction: column; align-items: center; font-size: 17.500px; line-height: 28px; letter-spacing: -.2px; }
.tray-m { width: 68px; display: flex; justify-content: center; font-family: "Liberation Sans", sans-serif; font-size: 33px; color: #fff; -webkit-text-stroke: .6px #fff; }
.tray-notif { width: 66px; height: 44px; position: relative; display: flex; justify-content: center; }
.notif-icon { width: 24px; height: 26px; margin: 8px 0 0 0; }
.notif-badge { position: absolute; left: 34px; top: 19px; width: 26px; height: 26px; border-radius: 50%; border: 1px solid #8a8a8a; background: #2a2a2a; font-size: 18px; line-height: 24px; text-align: center; color: #fff; }
.tray-edge { width: 2px; height: 60px; margin: 0 7px 0 8px; background: #6a6a6a; }
```
